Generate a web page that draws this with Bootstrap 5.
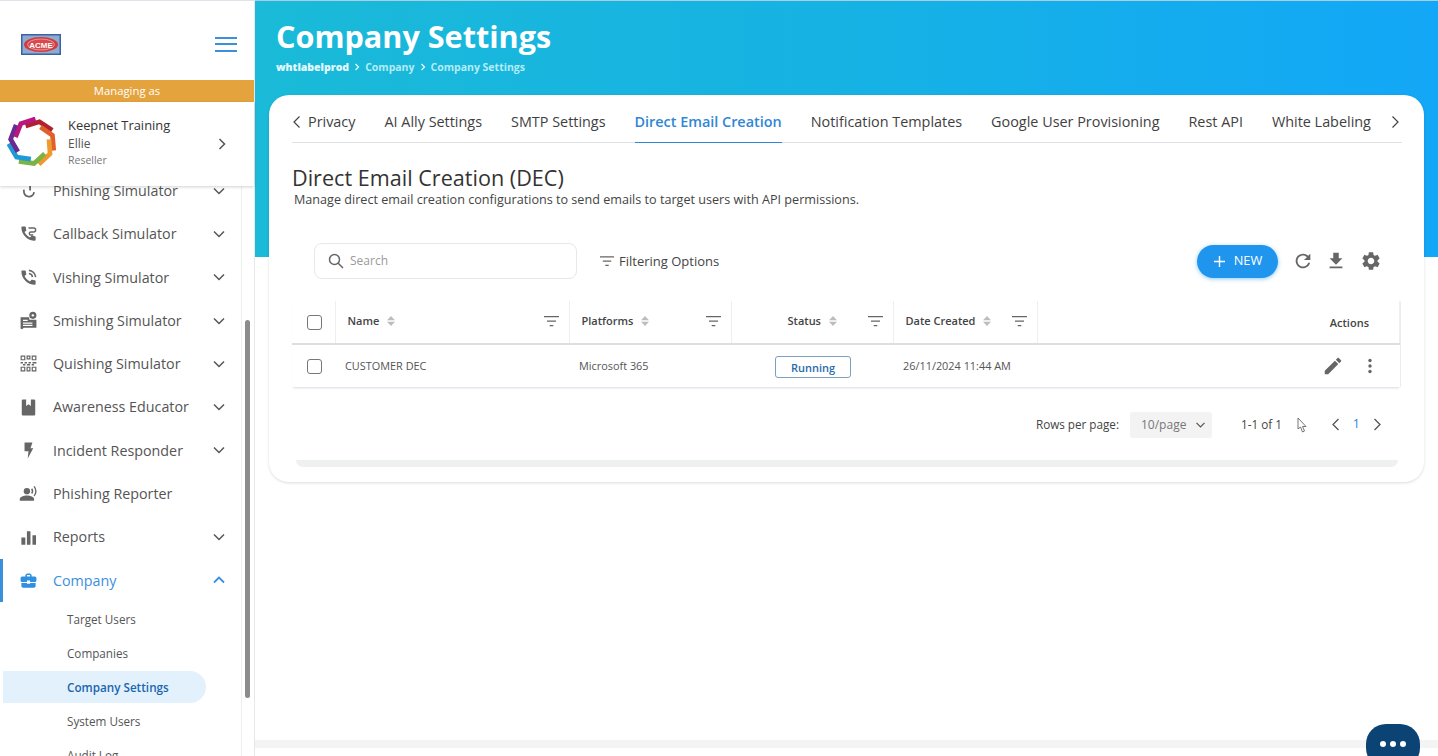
<!DOCTYPE html>
<html lang="en">

<head>
  <meta charset="UTF-8">
  <meta name="viewport" content="width=device-width, initial-scale=1">
  <title>Company Settings</title>
  <link href="https://cdn.jsdelivr.net/npm/bootstrap@5.3.3/dist/css/bootstrap.min.css" rel="stylesheet">
  <style>
    html, body { height: 100%; overflow: hidden; }
    body { font-family: "Open Sans", sans-serif; color: #3c3c3c; background: #fff; }
    svg { display: block; flex: none; }

    /* sidebar */
    .side { width: 255px; height: 756px; flex: none; border-right: 1px solid #e6e8eb; position: relative; }
    .side-logo { height: 80px; padding: 8px 17px 0 21px; box-shadow: inset 0 1px 0 #dfe4ea; }
    .menu-btn { width: 22px; height: 15px; border-top: 2px solid #3b8fdc; border-bottom: 2px solid #3b8fdc; position: relative; }
    .menu-btn::after { content: ""; position: absolute; left: 0; right: 0; top: 4.5px; height: 2px; background: #3b8fdc; }
    .managing { height: 22px; line-height: 22px; background: #e5a33e; color: #fff; font-size: 11.3px; text-align: center; }
    .account { height: 84px; padding: 0 26px 0 7px; box-shadow: 0 1px 3px rgba(0, 0, 0, .18); position: relative; z-index: 2; background: #fff; }
    .acc-logo { margin-bottom: 4px; }
    .acc-text { margin: 0 0 4px 11px; }
    .acc-name { font-size: 12.9px; font-weight: 500; color: #333; line-height: 19px; }
    .acc-user { font-size: 12px; color: #555; line-height: 18px; }
    .acc-role { font-size: 10.5px; color: #777; line-height: 15px; }
    .side-scroll { height: 570px; overflow: hidden; width: 242px; border-right: 1px solid #eceef0; }
    .side-list { margin-top: -17px; }
    .side-row { height: 43.3px; padding: 0 16px 0 19px; font-size: 14.3px; color: #555; gap: 15px; }
    .side-row .lbl { flex: 1; }
    .side-row.on { color: #3b8fdc; box-shadow: inset 3px 0 0 #3b8fdc; }
    .side-row svg.ico { width: 19px; height: 19px; fill: #666; }
    .side-row.on svg.ico { fill: #2f8fe0; }
    .chev { width: 12px; height: 12px; fill: none; stroke: #555; stroke-width: 1.5; }
    .on .chev { stroke: #3b8fdc; stroke-width: 1.8; }
    .sub-row { height: 34px; line-height: 34px; padding-left: 67px; font-size: 11.7px; color: #555; }
    .sub-row.on { color: #1a66ad; font-weight: 600; background: #e3f1fd; margin: 1px 0 1px 3px; padding-left: 64px; width: 203px; height: 32px; line-height: 32px; border-radius: 0 16px 16px 0; }
    .scroll-thumb { position: absolute; left: 245px; top: 320px; width: 5px; height: 378px; background: #8c8c8c; border-radius: 3px; }

    /* main */
    .main-col { flex: 1; min-width: 0; height: 756px; position: relative; }
    .hero { height: 257px; padding: 18px 21px; background: linear-gradient(90deg, #1abad8 0%, #16b2e4 50%, #13a7f7 100%); color: #fff; box-shadow: inset 0 1px 0 #a9cfe6; }
    .hero-title { font-size: 30.6px; font-weight: 700; line-height: 36px; margin: 0 0 5px; }
    .crumbs { font-size: 10.5px; font-weight: 700; line-height: 16px; gap: 4px; color: #b5ecf6; }
    .crumbs b { color: #e4f8fc; }
    .crumb-chev { width: 8px; height: 8px; fill: none; stroke: #e4f8fc; stroke-width: 1.3; }
    .panel { margin: -162px 14px 0; height: 387px; padding: 0 22px 0 23px; background: #fff; border-radius: 20px; box-shadow: 0 1px 3px rgba(0, 0, 0, .14); position: relative; }
    .tabs-line { height: 48px; border-bottom: 1px solid #dfe1e4; gap: 29px; }
    .tab-arrow { width: 10px; height: 14px; margin-top: 20px; fill: none; stroke: #444; stroke-width: 1.2; }
    .tab-prev { margin-right: -23px; }
    .tab-next { margin: 20px 0 0 -10px; }
    .tab-item { font-size: 14.4px; color: #3f3f3f; height: 48px; line-height: 54px; white-space: nowrap; }
    .tab-item.on { color: #2f86d6; font-weight: 600; border-bottom: 1px solid #2f86d6; }
    .sec-title { font-size: 21.6px; line-height: 28px; margin: 21px 0 0; color: #333; font-weight: 400; }
    .sec-sub { font-size: 12.62px; line-height: 16px; margin: 0 0 0 2px; color: #444; }
    .tool-row { height: 62px; margin: 22px 0 9px; padding: 0 22px; }
    .search-box { width: 263px; height: 36px; border: 1px solid #e8e8e8; border-radius: 8px; padding: 0 13px; gap: 6px; font-size: 12px; color: #9a9a9a; }
    .filter-opts { font-size: 13px; color: #444; gap: 5px; margin: 1px 0 0 23px; font-weight: 500; }
    .new-btn { width: 81px; height: 33px; background: #2095ee; border: 0; border-radius: 17px; color: #fff; font-size: 12.8px; font-weight: 500; box-shadow: 0 1px 4px rgba(32, 149, 238, .5); gap: 8px; }
    .tool-ico { width: 22px; height: 22px; fill: #666; }
    .ico-refresh { margin-left: 14px; }
    .ico-down { margin-left: 11px; }
    .ico-gear { margin: 0 -2px 0 13px; }
    .dec-table { table-layout: fixed; width: 1108px; margin: 0; font-size: 10.9px; color: #555; box-shadow: 0 2px 2px -1px rgba(30, 60, 110, .18), 1px 0 0 #efefef; }
    .dec-table th { height: 43px; padding: 0 10px 2px 12px; font-weight: 600; font-size: 11px; color: #444; border-right: 1px solid #eceef0; border-bottom: 2px solid #dcdee1; vertical-align: middle; }
    .dec-table td { height: 43px; padding: 0 0 0 10px; vertical-align: middle; border: 0; color: #555; }
    .dec-table .w-check { width: 43px; padding: 0; }
    .dec-table .w-name { width: 234px; }
    .dec-table .w-plat, .dec-table .w-status { width: 162px; }
    .dec-table .w-date { width: 144px; }
    .dec-table .w-act { padding: 3px 30px 0 0; text-align: right; }
    .dec-table .cell-check { padding: 0; }
    .dec-table .cell-act { padding: 0 28px 0 0; }
    .status-head { padding-left: 44px; }
    .act-wrap { gap: 24px; }
    .cb-box { width: 15px; height: 15px; border: 1.2px solid #777; border-radius: 3px; margin-left: 15px; }
    .sort-mark { width: 8px; height: 12px; fill: #bdbdbd; }
    .flt { width: 15px; height: 11px; fill: #666; }
    .run-tag { display: block; width: 76px; height: 22px; line-height: 21px; margin: 1px 0 0 34px; border: 1px solid #7d9fc0; border-radius: 3px; color: #2a6ca8; font-size: 11px; font-weight: 600; text-align: center; }
    .pager { height: 73px; padding: 2px 20px 0 0; font-size: 11.7px; color: #444; }
    .rows-sel { width: 82px; height: 26px; background: #f3f3f3; border-radius: 3px; margin-left: 11px; padding: 0 7px 0 11px; color: #777; font-size: 12px; }
    .range-txt { margin-left: 29px; }
    .cursor-mark { margin: 0 24px 0 15px; }
    .pg-chev { width: 10px; height: 13px; fill: none; stroke: #555; stroke-width: 1.3; }
    .pg-num { color: #2a86dc; margin: 0 12px; font-size: 12.5px; font-weight: 500; }
    .panel-foot { height: 7px; margin: 0 4px; background: #eff0f0; border-radius: 0 0 14px 14px; }
    .page-foot { position: absolute; left: 0; right: 0; bottom: 8px; height: 8px; background: #f4f4f4; }
    .chat-btn { position: absolute; right: 18px; top: 724px; width: 54px; height: 44px; border-radius: 20px; background: #0b4474; gap: 4px; }
    .chat-btn i { width: 6px; height: 6px; border-radius: 50%; background: #fff; margin-top: -4px; }
  </style>
</head>

<body>
  <div class="d-flex">
    <!-- sidebar -->
    <aside class="side">
      <div class="side-logo d-flex align-items-center justify-content-between">
        <svg width="40" height="21" viewBox="0 0 40 21">
          <rect width="40" height="21" fill="#3a63a5" />
          <rect x="1.5" y="1.5" width="37" height="18" fill="#8fa9cf" />
          <ellipse cx="20" cy="10.5" rx="17" ry="7.5" fill="#cf3b3f" />
          <ellipse cx="20" cy="10.5" rx="13.5" ry="5.5" fill="#d9494b" stroke="#eeb9b9" stroke-width=".7" />
          <text x="20" y="13.5" font-family="Liberation Sans" font-size="8" font-weight="700" text-anchor="middle" fill="#fff">ACME</text>
        </svg>
        <div class="menu-btn"></div>
      </div>
      <div class="managing">Managing as</div>
      <div class="account d-flex align-items-center">
        <svg class="acc-logo" width="50" height="50" viewBox="-23.5 -23.5 47 47" fill="none" stroke-width="4.4">
          <path d="M-6 -15 L7 -19 L19 -11" stroke="#b21f2e" />
          <path d="M-6 -15 L7 -19 L19 -11" transform="rotate(51.4)" stroke="#e0602a" />
          <path d="M-6 -15 L7 -19 L19 -11" transform="rotate(102.9)" stroke="#ee9a2e" />
          <path d="M-6 -15 L7 -19 L19 -11" transform="rotate(154.3)" stroke="#7cb342" />
          <path d="M-6 -15 L7 -19 L19 -11" transform="rotate(205.7)" stroke="#1e9ad6" />
          <path d="M-6 -15 L7 -19 L19 -11" transform="rotate(257.1)" stroke="#6a2a92" />
          <path d="M-6 -15 L7 -19 L19 -11" transform="rotate(308.6)" stroke="#b8177f" />
        </svg>
        <div class="acc-text flex-grow-1">
          <div class="acc-name">Keepnet Training</div>
          <div class="acc-user">Ellie</div>
          <div class="acc-role">Reseller</div>
        </div>
        <svg class="chev" viewBox="0 0 12 12"><path d="M3.5 1 L8.5 6 L3.5 11" /></svg>
      </div>

      <div class="side-scroll">
        <div class="side-list">
          <div class="side-row d-flex align-items-center">
            <svg class="ico" viewBox="0 0 24 24" fill="none"><path d="M14 3v9M19 14a6.500 6.500 0 0 1-12.500 1.500L6 11" fill="none" stroke="#666" stroke-width="2.200" /></svg>
            <span class="lbl">Phishing Simulator</span>
            <svg class="chev" viewBox="0 0 12 12"><path d="M1 3.5 L6 8.5 L11 3.5" /></svg>
          </div>
          <div class="side-row d-flex align-items-center">
            <svg class="ico" viewBox="0 0 24 24"><path d="M20.01 15.38c-1.23 0-2.42-.2-3.53-.56-.35-.12-.74-.03-1.01.24l-1.57 1.97c-2.83-1.35-5.48-3.9-6.89-6.83l1.95-1.66c.27-.28.35-.67.24-1.02-.37-1.11-.56-2.3-.56-3.53 0-.54-.45-.99-.99-.99H4.19C3.65 3 3 3.24 3 3.99 3 13.28 10.73 21 20.01 21c.71 0 .99-.63.99-1.18v-3.45c0-.54-.45-.99-.99-.99z" /><path d="M12 5h6.5a2.5 2.5 0 0 1 0 5H15a2 2 0 0 0 0 4h3" fill="none" stroke="#666" stroke-width="1.8" /></svg>
            <span class="lbl">Callback Simulator</span>
            <svg class="chev" viewBox="0 0 12 12"><path d="M1 3.5 L6 8.5 L11 3.5" /></svg>
          </div>
          <div class="side-row d-flex align-items-center">
            <svg class="ico" viewBox="0 0 24 24"><path d="M20.01 15.38c-1.23 0-2.42-.2-3.53-.56-.35-.12-.74-.03-1.01.24l-1.57 1.97c-2.83-1.35-5.48-3.9-6.89-6.83l1.95-1.66c.27-.28.35-.67.24-1.02-.37-1.11-.56-2.3-.56-3.53 0-.54-.45-.99-.99-.99H4.19C3.65 3 3 3.24 3 3.99 3 13.28 10.73 21 20.01 21c.71 0 .99-.63.99-1.18v-3.45c0-.54-.45-.99-.99-.99z" /><path d="M12.5 7a5 5 0 0 1 4.5 4.5M12.5 3a9 9 0 0 1 8.5 8.5" fill="none" stroke="#666" stroke-width="1.9" /></svg>
            <span class="lbl">Vishing Simulator</span>
            <svg class="chev" viewBox="0 0 12 12"><path d="M1 3.5 L6 8.5 L11 3.5" /></svg>
          </div>
          <div class="side-row d-flex align-items-center">
            <svg class="ico" viewBox="0 0 24 24"><path d="M2 8h11v3h9v10H6l-2 2-2-.5zM5 11v1.5h6V11zm0 3.5V16h12v-1.5zm0 3V19h12v-1.5z" fill-rule="evenodd" /><circle cx="17.5" cy="5.5" r="4.5" /><circle cx="17.5" cy="5.5" r="1.5" fill="#fff" /></svg>
            <span class="lbl">Smishing Simulator</span>
            <svg class="chev" viewBox="0 0 12 12"><path d="M1 3.5 L6 8.5 L11 3.5" /></svg>
          </div>
          <div class="side-row d-flex align-items-center">
            <svg class="ico" viewBox="0 0 24 24"><path d="M2 2h6v6H2zm1.5 1.5v3h3v-3zM9.500 2h5v5h-5zm1.500 1.500v2h2v-2zM16 2h6v6h-6zm1.500 1.500v3h3v-3zM2 16h6v6H2zm1.500 1.500v3h3v-3zM16 16h6v6h-6zm1.500 1.500v3h3v-3zM9.500 16h5v6h-5zm1.500 1.500v3h2v-3zM2 10h3v2H2zm5 0h3v2H7zm5 0h3v2h-3zm5 0h5v2h-5zM5 12.500h3v2H5zm5 0h4v2h-4zm6 0h3v2h-3z" fill-rule="evenodd" /></svg>
            <span class="lbl">Quishing Simulator</span>
            <svg class="chev" viewBox="0 0 12 12"><path d="M1 3.5 L6 8.5 L11 3.5" /></svg>
          </div>
          <div class="side-row d-flex align-items-center">
            <svg class="ico" viewBox="0 0 24 24"><path d="M5 2h4v8l3-2 3 2V2h4a1.500 1.500 0 0 1 1.500 1.500v17A1.500 1.500 0 0 1 19 22H5a1.500 1.500 0 0 1-1.500-1.500v-17A1.500 1.500 0 0 1 5 2z" /></svg>
            <span class="lbl">Awareness Educator</span>
            <svg class="chev" viewBox="0 0 12 12"><path d="M1 3.5 L6 8.5 L11 3.5" /></svg>
          </div>
          <div class="side-row d-flex align-items-center">
            <svg class="ico" viewBox="0 0 24 24"><path d="M7 2h10l-2.500 7H18l-7 13 1-9H7z" /></svg>
            <span class="lbl">Incident Responder</span>
            <svg class="chev" viewBox="0 0 12 12"><path d="M1 3.5 L6 8.5 L11 3.5" /></svg>
          </div>
          <div class="side-row d-flex align-items-center">
            <svg class="ico" viewBox="0 0 24 24"><circle cx="10" cy="9" r="4" /><path d="M1 21v-2c0-3 5-4.500 9-4.500s9 1.500 9 4.500v2z" /><path d="M16 6a5 5 0 0 1 0 6M19 3a9 9 0 0 1 0 12" fill="none" stroke="#666" stroke-width="1.800" /></svg>
            <span class="lbl">Phishing Reporter</span>
          </div>
          <div class="side-row d-flex align-items-center">
            <svg class="ico" viewBox="0 0 24 24"><path d="M3 12h5v9H3zM10 4h4.500v17H10zM17 9h4.500v12H17z" /></svg>
            <span class="lbl">Reports</span>
            <svg class="chev" viewBox="0 0 12 12"><path d="M1 3.5 L6 8.5 L11 3.5" /></svg>
          </div>
          <div class="side-row on d-flex align-items-center">
            <svg class="ico" viewBox="0 0 24 24"><path d="M10 16v-1H3.010L3 19c0 1.110.890 2 2 2h14c1.110 0 2-.890 2-2v-4h-7v1h-4zm10-9h-4.010V5l-2-2h-4l-2 2v2H4c-1.100 0-2 .9-2 2v3c0 1.110.890 2 2 2h6v-2h4v2h6c1.100 0 2-.9 2-2V9c0-1.100-.9-2-2-2zm-6 0h-4V5h4v2z" /></svg>
            <span class="lbl">Company</span>
            <svg class="chev" viewBox="0 0 12 12"><path d="M1 8.500 L6 3.500 L11 8.500" /></svg>
          </div>
          <div class="sub-row">Target Users</div>
          <div class="sub-row">Companies</div>
          <div class="sub-row on">Company Settings</div>
          <div class="sub-row">System Users</div>
          <div class="sub-row">Audit Log</div>
        </div>
      </div>
      <div class="scroll-thumb"></div>
    </aside>

    <!-- main -->
    <main class="main-col">
      <div class="hero">
        <h1 class="hero-title">Company Settings</h1>
        <div class="crumbs d-flex align-items-center">
          <b>whtlabelprod</b>
          <svg class="crumb-chev" viewBox="0 0 8 8"><path d="M2.500 1 L5.500 4 L2.500 7" /></svg>
          <span>Company</span>
          <svg class="crumb-chev" viewBox="0 0 8 8"><path d="M2.500 1 L5.500 4 L2.500 7" /></svg>
          <span>Company Settings</span>
        </div>
      </div>

      <section class="panel">
        <div class="tabs-line d-flex align-items-start">
          <svg class="tab-arrow tab-prev" viewBox="0 0 10 14"><path d="M7.500 1.500 L2 7 L7.500 12.500" /></svg>
          <span class="tab-item">Privacy</span>
          <span class="tab-item">AI Ally Settings</span>
          <span class="tab-item">SMTP Settings</span>
          <span class="tab-item on">Direct Email Creation</span>
          <span class="tab-item">Notification Templates</span>
          <span class="tab-item">Google User Provisioning</span>
          <span class="tab-item">Rest API</span>
          <span class="tab-item">White Labeling</span>
          <svg class="tab-arrow tab-next" viewBox="0 0 10 14"><path d="M2.500 1.500 L8 7 L2.500 12.500" /></svg>
        </div>

        <h2 class="sec-title">Direct Email Creation (DEC)</h2>
        <p class="sec-sub">Manage direct email creation configurations to send emails to target users with API permissions.</p>

        <div class="tool-row d-flex align-items-center">
          <div class="search-box d-flex align-items-center">
            <svg width="16" height="16" viewBox="0 0 16 16" fill="none" stroke="#666" stroke-width="1.500"><circle cx="6.500" cy="6.500" r="5" /><path d="M10 10 L15 15" /></svg>
            <span>Search</span>
          </div>
          <div class="filter-opts d-flex align-items-center">
            <svg width="14" height="11" viewBox="0 0 15 11" fill="#666"><path d="M0 0h15v1.300H0zM3 4.500h9v1.300H3zM5.700 9h3.600v1.300H5.700z" /></svg>
            <span>Filtering Options</span>
          </div>
          <button class="new-btn d-flex align-items-center justify-content-center ms-auto" type="button">
            <svg width="13" height="13" viewBox="0 0 13 13" stroke="#fff" stroke-width="1.400"><path d="M6.500 1v11M1 6.500h11" /></svg>
            NEW
          </button>
          <svg class="tool-ico ico-refresh" viewBox="0 0 24 24"><path d="M17.650 6.350C16.200 4.900 14.210 4 12 4c-4.420 0-7.990 3.580-7.990 8s3.570 8 7.990 8c3.730 0 6.840-2.550 7.730-6h-2.080c-.820 2.330-3.040 4-5.650 4-3.310 0-6-2.690-6-6s2.690-6 6-6c1.660 0 3.140.690 4.220 1.780L13 11h7V4l-2.350 2.350z" /></svg>
          <svg class="tool-ico ico-down" viewBox="0 0 24 24"><path d="M19 9h-4V3H9v6H5l7 7 7-7zM5 18v2h14v-2H5z" /></svg>
          <svg class="tool-ico ico-gear" viewBox="0 0 24 24"><path d="M19.140 12.940c.04-.3.060-.610.060-.940 0-.320-.020-.640-.070-.940l2.030-1.580c.180-.140.230-.410.120-.610l-1.920-3.320c-.120-.220-.370-.290-.590-.220l-2.390.960c-.5-.380-1.030-.7-1.620-.94l-.360-2.540c-.040-.240-.240-.410-.480-.410h-3.840c-.240 0-.430.170-.470.410l-.360 2.540c-.590.240-1.130.570-1.620.94l-2.390-.960c-.220-.080-.470 0-.590.220L2.740 8.870c-.120.210-.080.470.120.610l2.030 1.580c-.050.3-.090.630-.090.940s.020.640.07.940l-2.030 1.580c-.180.140-.230.410-.12.610l1.920 3.320c.120.220.370.290.590.220l2.390-.960c.5.380 1.030.7 1.620.94l.360 2.540c.050.240.240.410.48.410h3.840c.240 0 .440-.170.470-.41l.360-2.540c.590-.240 1.130-.560 1.620-.94l2.390.960c.220.080.470 0 .590-.220l1.920-3.320c.120-.220.070-.47-.12-.61l-2.010-1.580zM12 15.600c-1.980 0-3.600-1.620-3.600-3.600s1.620-3.600 3.600-3.600 3.600 1.620 3.600 3.600-1.620 3.600-3.600 3.600z" /></svg>
        </div>

        <table class="table dec-table">
          <thead>
            <tr>
              <th class="w-check"><div class="cb-box"></div></th>
              <th class="w-name">
                <div class="d-flex align-items-center gap-2"><span>Name</span>
                  <svg class="sort-mark" viewBox="0 0 8 12"><path d="M4 1l4 4.300H0zM4 11L0 6.700h8z" /></svg>
                  <svg class="flt ms-auto" viewBox="0 0 15 11"><path d="M0 0h15v1.300H0zM3 4.500h9v1.300H3zM5.700 9h3.600v1.300H5.700z" /></svg>
                </div>
              </th>
              <th class="w-plat">
                <div class="d-flex align-items-center gap-2"><span>Platforms</span>
                  <svg class="sort-mark" viewBox="0 0 8 12"><path d="M4 1l4 4.300H0zM4 11L0 6.700h8z" /></svg>
                  <svg class="flt ms-auto" viewBox="0 0 15 11"><path d="M0 0h15v1.300H0zM3 4.500h9v1.300H3zM5.700 9h3.600v1.300H5.700z" /></svg>
                </div>
              </th>
              <th class="w-status">
                <div class="d-flex align-items-center gap-2 status-head"><span>Status</span>
                  <svg class="sort-mark" viewBox="0 0 8 12"><path d="M4 1l4 4.300H0zM4 11L0 6.700h8z" /></svg>
                  <svg class="flt ms-auto" viewBox="0 0 15 11"><path d="M0 0h15v1.300H0zM3 4.500h9v1.300H3zM5.700 9h3.600v1.300H5.700z" /></svg>
                </div>
              </th>
              <th class="w-date">
                <div class="d-flex align-items-center gap-2"><span>Date Created</span>
                  <svg class="sort-mark" viewBox="0 0 8 12"><path d="M4 1l4 4.300H0zM4 11L0 6.700h8z" /></svg>
                  <svg class="flt ms-auto" viewBox="0 0 15 11"><path d="M0 0h15v1.300H0zM3 4.500h9v1.300H3zM5.700 9h3.600v1.300H5.700z" /></svg>
                </div>
              </th>
              <th class="w-act">Actions</th>
            </tr>
          </thead>
          <tbody>
            <tr>
              <td class="cell-check"><div class="cb-box"></div></td>
              <td>CUSTOMER DEC</td>
              <td>Microsoft 365</td>
              <td><span class="run-tag">Running</span></td>
              <td>26/11/2024 11:44 AM</td>
              <td class="cell-act">
                <div class="d-flex align-items-center justify-content-end act-wrap">
                  <svg class="tool-ico" viewBox="0 0 24 24"><path d="M3 17.250V21h3.750L17.810 9.940l-3.750-3.750L3 17.250zM20.710 7.040c.39-.39.39-1.020 0-1.410l-2.340-2.340c-.39-.39-1.020-.39-1.410 0l-1.830 1.830 3.750 3.750 1.830-1.830z" /></svg>
                  <svg width="4" height="16" viewBox="0 0 4 16" fill="#666"><circle cx="2" cy="2.500" r="1.700" /><circle cx="2" cy="8" r="1.700" /><circle cx="2" cy="13.500" r="1.700" /></svg>
                </div>
              </td>
            </tr>
          </tbody>
        </table>

        <div class="pager d-flex align-items-center justify-content-end">
          <span>Rows per page:</span>
          <div class="rows-sel d-flex align-items-center justify-content-between">
            <span>10/page</span>
            <svg width="9" height="6" viewBox="0 0 9 6" fill="none" stroke="#555" stroke-width="1.200"><path d="M.5 .8 L4.500 4.800 L8.500 .8" /></svg>
          </div>
          <span class="range-txt">1-1 of 1</span>
          <svg class="cursor-mark" width="10" height="16" viewBox="0 0 10 16" fill="#fff" stroke="#666" stroke-width=".9"><path d="M1 1 L1 12 L3.500 10 L5.500 15 L7.500 14 L5.500 9.500 L9 9.500 Z" /></svg>
          <svg class="pg-chev" viewBox="0 0 10 13"><path d="M7.500 1 L2 6.500 L7.500 12" /></svg>
          <span class="pg-num">1</span>
          <svg class="pg-chev" viewBox="0 0 10 13"><path d="M2.500 1 L8 6.500 L2.500 12" /></svg>
        </div>
        <div class="panel-foot"></div>
      </section>

      <div class="page-foot"></div>
      <div class="chat-btn d-flex align-items-center justify-content-center"><i></i><i></i><i></i></div>
    </main>
  </div>

  <script src="https://cdn.jsdelivr.net/npm/bootstrap@5.3.3/dist/js/bootstrap.bundle.min.js"></script>
</body>

</html>
